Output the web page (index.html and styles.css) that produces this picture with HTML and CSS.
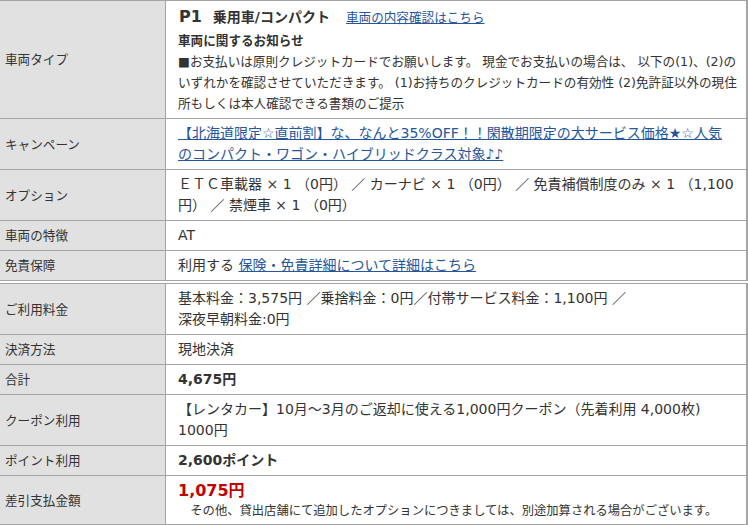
FILE: index.html
```html
<!DOCTYPE html>
<html lang="ja">
<head>
<meta charset="utf-8">
<title>予約内容</title>
<link rel="stylesheet" href="styles.css">
</head>
<body>
<table class="detail">
  <colgroup><col class="col-label"><col></colgroup>
  <tr class="row-car">
    <th>車両タイプ</th>
    <td>
      <div class="car-title"><span class="car-code">P1</span><span class="car-class">乗用車/コンパクト</span><a href="#" class="car-link">車両の内容確認はこちら</a></div>
      <div class="notice-title">車両に関するお知らせ</div>
      <p class="notice">■お支払いは原則クレジットカードでお願いします。 現金でお支払いの場合は、 以下の(1)、(2)の<br>いずれかを確認させていただきます。 (1)お持ちのクレジットカードの有効性 (2)免許証以外の現住<br>所もしくは本人確認できる書類のご提示</p>
    </td>
  </tr>
  <tr>
    <th>キャンペーン</th>
    <td><a href="#">【北海道限定☆直前割】な、なんと35%OFF！！閑散期限定の大サービス価格★☆人気<br>のコンパクト・ワゴン・ハイブリッドクラス対象♪♪</a></td>
  </tr>
  <tr>
    <th>オプション</th>
    <td>ＥＴＣ車載器 × 1 （0円） ／ カーナビ × 1 （0円） ／ 免責補償制度のみ × 1 （1,100円） ／ 禁煙車 × 1 （0円）</td>
  </tr>
  <tr>
    <th>車両の特徴</th>
    <td>AT</td>
  </tr>
  <tr>
    <th>免責保障</th>
    <td>利用する <a href="#">保険・免責詳細について詳細はこちら</a></td>
  </tr>
</table>
<table class="detail">
  <colgroup><col class="col-label"><col></colgroup>
  <tr>
    <th>ご利用料金</th>
    <td>基本料金：3,575円 ／乗捨料金：0円／付帯サービス料金：1,100円 ／<br>深夜早朝料金:0円</td>
  </tr>
  <tr>
    <th>決済方法</th>
    <td>現地決済</td>
  </tr>
  <tr>
    <th>合計</th>
    <td><strong class="amount">4,675円</strong></td>
  </tr>
  <tr>
    <th>クーポン利用</th>
    <td>【レンタカー】10月～3月のご返却に使える1,000円クーポン（先着利用 4,000枚)<br>1000円</td>
  </tr>
  <tr>
    <th>ポイント利用</th>
    <td><strong class="amount">2,600ポイント</strong></td>
  </tr>
  <tr>
    <th>差引支払金額</th>
    <td>
      <div class="pay"><strong class="amount amount-red">1,075円</strong></div>
      <div class="pay-note">　その他、貸出店舗にて追加したオプションにつきましては、別途加算される場合がございます。</div>
    </td>
  </tr>
</table>
</body>
</html>
```
FILE: styles.css
```css
* { box-sizing: border-box; }

body {
  margin: 0;
  background: #ffffff;
  color: #333333;
  font-family: "DejaVu Sans", "Noto Sans CJK JP", sans-serif;
}

.detail {
  width: 748px;
  border-spacing: 0;
  border-top: 1px solid #a3a3a3;
  table-layout: fixed;
}

.detail + .detail {
  margin-top: 2px;
}

.col-label {
  width: 166px;
}

.detail th,
.detail td {
  border-bottom: 1px solid #a3a3a3;
}

.detail th {
  background: #e1e1e1;
  border-right: 1px solid #a3a3a3;
  font-weight: normal;
  text-align: left;
  vertical-align: middle;
  padding: 0 5px;
  font-size: 12.6px;
  line-height: 21px;
}

.detail td {
  border-right: 2px solid #a3a3a3;
  padding: 4px 4px 4px 12px;
  font-size: 14px;
  line-height: 21px;
  vertical-align: top;
}

.detail a {
  color: #26569c;
  text-decoration: underline;
}

.car-title {
  line-height: 24px;
  font-size: 14px;
  font-weight: bold;
}

.car-code {
  font-size: 16px;
  margin: 0 11px 0 1px;
}

.car-link {
  font-size: 12.6px;
  font-weight: normal;
  margin-left: 16px;
}

.notice-title {
  font-weight: bold;
  font-size: 12.6px;
}

.notice {
  margin: 0;
  font-size: 12.6px;
}

.amount {
  font-size: 14px;
  font-weight: bold;
}

.pay {
  line-height: 21px;
}

.amount-red {
  color: #c40000;
  font-size: 16px;
}

.pay-note {
  font-size: 12.3px;
  line-height: 18px;
}
```
